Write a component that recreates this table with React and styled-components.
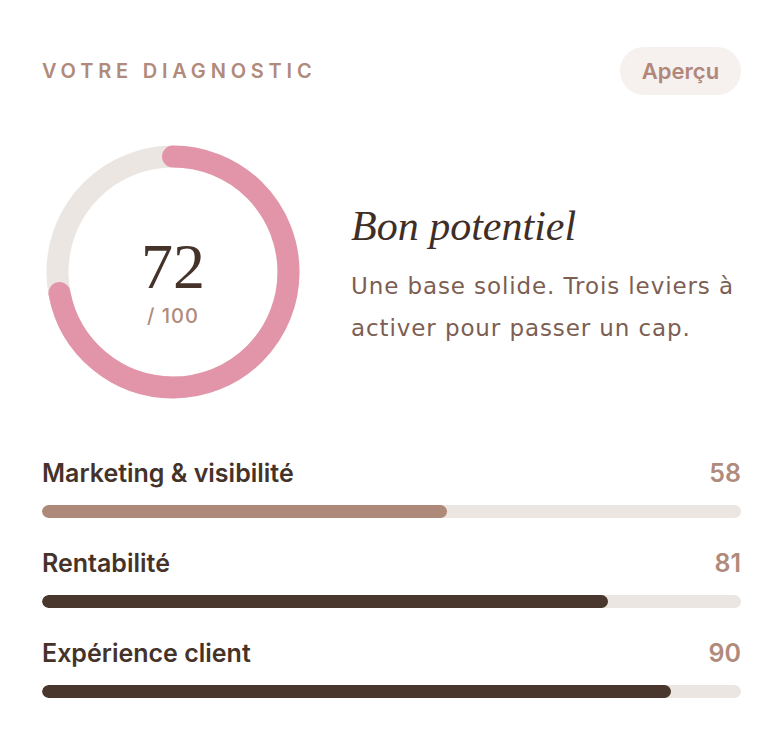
import React from "react";
import styled, { createGlobalStyle } from "styled-components";

const Global = createGlobalStyle`
  html, body { margin: 0; padding: 0; background: #ffffff; }
  body { font-family: Inter, "Liberation Sans", sans-serif; }
`;

const Card = styled.div`
  width: 784px;
  height: 738px;
  box-sizing: border-box;
  padding: 47px 43px 0 42px;
  background: #ffffff;
`;

const Header = styled.div`
  display: flex;
  align-items: center;
  justify-content: space-between;
  height: 48px;
`;

const Eyebrow = styled.div`
  font-family: Inter, sans-serif;
  font-weight: 600;
  font-size: 20px;
  letter-spacing: 4.8px;
  color: #b08a7b;
  text-transform: uppercase;
`;

const Pill = styled.button`
  height: 48px;
  width: 121px;
  border: none;
  border-radius: 24px;
  background: #f6f1ee;
  color: #b0877a;
  font-family: Inter, sans-serif;
  font-weight: 600;
  font-size: 22px;
  padding: 0;
  cursor: pointer;
`;

const Hero = styled.div`
  display: grid;
  grid-template-columns: 254px 1fr;
  column-gap: 51px;
  align-items: center;
  margin-top: 50px;
  padding-left: 4px;
`;

const Donut = styled.div`
  display: grid;
  width: 254px;
  height: 254px;
  & > * { grid-area: 1 / 1; }
`;

const ScoreBox = styled.div`
  display: flex;
  flex-direction: column;
  align-items: center;
  justify-content: center;
  padding-top: 18px;
`;

const Score = styled.div`
  font-family: "Liberation Serif", serif;
  font-size: 64px;
  line-height: 1;
  color: #45332a;
`;

const OutOf = styled.div`
  font-family: Inter, sans-serif;
  font-weight: 500;
  font-size: 20px;
  letter-spacing: 1px;
  color: #b08a7b;
  margin-top: 5px;
`;

const Copy = styled.div`
  display: flex;
  flex-direction: column;
  padding-top: 8px;
`;

const Verdict = styled.h2`
  margin: 0;
  font-family: "Liberation Serif", serif;
  font-style: italic;
  font-weight: 400;
  font-size: 42px;
  line-height: 1.1;
  color: #3f2e26;
`;

const Blurb = styled.p`
  margin: 15px 0 0;
  font-family: "DejaVu Sans", sans-serif;
  font-size: 23px;
  letter-spacing: 0.9px;
  line-height: 42px;
  color: #7c5e52;
`;

const Bars = styled.div`
  display: flex;
  flex-direction: column;
  gap: 29px;
  margin-top: 58px;
`;

const Row = styled.div`
  display: flex;
  flex-direction: column;
  gap: 16px;
`;

const RowHead = styled.div`
  display: flex;
  justify-content: space-between;
  align-items: baseline;
  font-family: Inter, sans-serif;
  font-weight: 600;
  font-size: 25px;
  line-height: 32px;
`;

const Label = styled.span`
  color: #45332a;
`;

const Value = styled.span`
  color: #b08a7b;
`;

const Track = styled.div`
  height: 13px;
  border-radius: 7px;
  background: #ebe6e2;
  overflow: hidden;
  display: flex;
`;

const Fill = styled.div`
  height: 100%;
  border-radius: 7px;
  background: ${(p) => (p.$tone === "light" ? "#ae8878" : "#49372d")};
`;

const R = 115.5;
const C = 2 * Math.PI * R;

function Ring({ value }) {
  return (
    <svg width="254" height="254" viewBox="0 0 254 254">
      <circle cx="127" cy="127" r={R} fill="none" stroke="#ebe6e2" strokeWidth="22" />
      <circle
        cx="127"
        cy="127"
        r={R}
        fill="none"
        stroke="#e295a9"
        strokeWidth="22"
        strokeLinecap="round"
        strokeDasharray={`${(value / 100) * C} ${C}`}
        transform="rotate(-90 127 127)"
      />
    </svg>
  );
}

const items = [
  { label: "Marketing & visibilité", value: 58, tone: "light" },
  { label: "Rentabilité", value: 81, tone: "dark" },
  { label: "Expérience client", value: 90, tone: "dark" },
];

export default function App() {
  return (
    <>
      <Global />
      <Card>
        <Header>
          <Eyebrow>Votre diagnostic</Eyebrow>
          <Pill>Aperçu</Pill>
        </Header>
        <Hero>
          <Donut>
            <Ring value={72} />
            <ScoreBox>
              <Score>72</Score>
              <OutOf>/ 100</OutOf>
            </ScoreBox>
          </Donut>
          <Copy>
            <Verdict>Bon potentiel</Verdict>
            <Blurb>
              Une base solide. Trois leviers à activer pour passer un cap.
            </Blurb>
          </Copy>
        </Hero>
        <Bars>
          {items.map((it) => (
            <Row key={it.label}>
              <RowHead>
                <Label>{it.label}</Label>
                <Value>{it.value}</Value>
              </RowHead>
              <Track>
                <Fill $tone={it.tone} style={{ width: `${it.value}%` }} />
              </Track>
            </Row>
          ))}
        </Bars>
      </Card>
    </>
  );
}
